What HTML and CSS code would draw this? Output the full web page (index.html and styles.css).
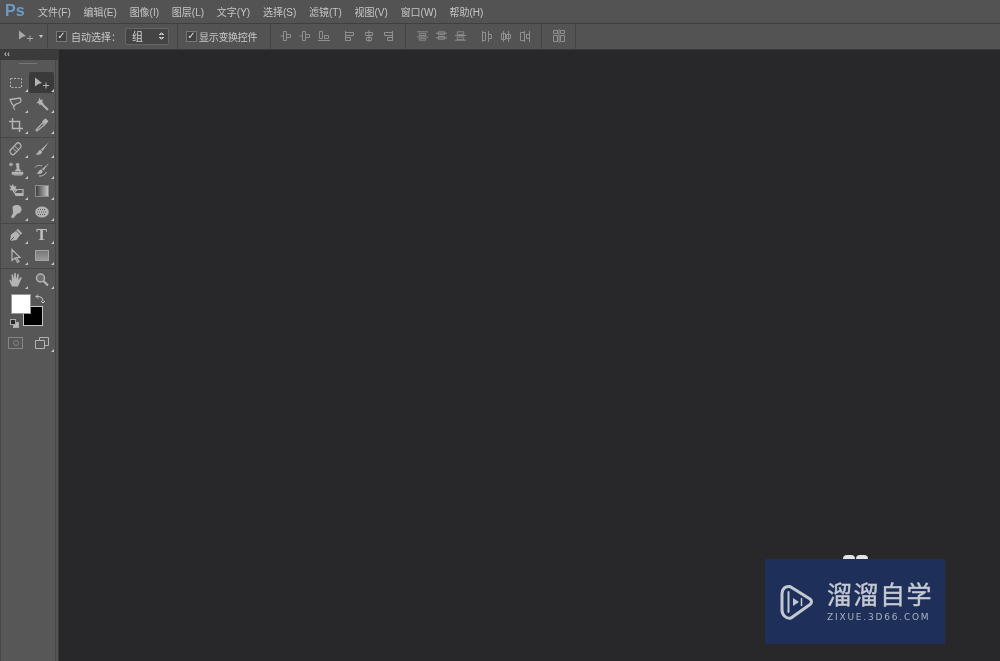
FILE: index.html
```html
<!DOCTYPE html>
<html lang="zh-CN">
<head>
  <meta charset="UTF-8" />
  <title>Photoshop</title>
  <link rel="stylesheet" href="styles.css">
</head>
<body>
  <svg class="defs" width="0" height="0">
    <symbol id="al-a" viewBox="0 0 12 12"><path d="M3.500 1.500h3v9h-3zM.5 6h3M6.500 4.500h4v3h-4z" fill="none" stroke="currentColor"/></symbol>
    <symbol id="al-b" viewBox="0 0 12 12"><path d="M1.500 1.500h3v7h-3zM6.500 5.500h4v3h-4zM0 10.500h12" fill="none" stroke="currentColor"/></symbol>
    <symbol id="al-c" viewBox="0 0 12 12"><path d="M1.500 1v10M1.500 2.500h8v3h-8zM1.500 7.500h5v3h-5z" fill="none" stroke="currentColor"/></symbol>
    <symbol id="al-d" viewBox="0 0 12 12"><path d="M6 0v12M2.500 2.500h7v3h-7zM3.500 7.500h5v3h-5z" fill="none" stroke="currentColor"/></symbol>
    <symbol id="al-e" viewBox="0 0 12 12"><path d="M10.500 1v10M2.500 2.500h8v3h-8zM5.500 7.500h5v3h-5z" fill="none" stroke="currentColor"/></symbol>
    <symbol id="al-f" viewBox="0 0 14 12"><path d="M1 1.500h12M3.500 3.500h7v2h-7zM1 7h12M3.500 8.500h7v2h-7z" fill="none" stroke="currentColor"/></symbol>
    <symbol id="al-g" viewBox="0 0 14 12"><path d="M1 3h12M3.500 1.500h7v3h-7zM1 8h12M3.500 6.500h7v3h-7z" fill="none" stroke="currentColor"/></symbol>
    <symbol id="al-h" viewBox="0 0 14 12"><path d="M3.500 1.500h7v3h-7zM1 5.500h12M3.500 7h7v3h-7zM1 10.500h12" fill="none" stroke="currentColor"/></symbol>
    <symbol id="al-i" viewBox="0 0 12 13"><path d="M1.500 1v11M1.500 2.500h3v8h-3zM7.500 1v11M7.500 4.500h3v4h-3z" fill="none" stroke="currentColor"/></symbol>
    <symbol id="al-j" viewBox="0 0 12 13"><path d="M3.500 1v11M1.500 3.500h4v6h-4zM8.500 1v11M6.500 4.500h4v4h-4z" fill="none" stroke="currentColor"/></symbol>
    <symbol id="al-k" viewBox="0 0 12 13"><path d="M5.500 1v11M1.500 2.500h4v8h-4zM10.500 1v11M7.500 4.500h3v4h-3z" fill="none" stroke="currentColor"/></symbol>
    <symbol id="al-l" viewBox="0 0 14 14"><path d="M1.500 1.500h4v3h-4zM8.500 1.500h4v3h-4zM1.500 6.500h4v6h-4zM8.500 6.500h4v6h-4zM7 0v14" fill="none" stroke="currentColor"/></symbol>
    <symbol id="move" viewBox="0 0 18 14"><path d="M2 1.500L9 7 5.500 8 2 10.500z" fill="currentColor"/><path d="M13 6.500v6M10 9.500h6" stroke="currentColor" fill="none"/></symbol>
  </svg>

  <header class="menubar">
    <span class="ps-logo">Ps</span>
    <nav class="menu">
      <span>文件(F)</span><span>编辑(E)</span><span>图像(I)</span><span>图层(L)</span><span>文字(Y)</span>
      <span>选择(S)</span><span>滤镜(T)</span><span>视图(V)</span><span>窗口(W)</span><span>帮助(H)</span>
    </nav>
  </header>

  <div class="optionsbar">
    <div class="grip"></div>
    <div class="opt-tool">
      <svg class="opt-move" width="18" height="14"><use href="#move"/></svg>
      <span class="caret"></span>
    </div>
    <div class="opt-group opt-auto">
      <span class="check">✓</span>
      <span class="opt-label">自动选择：</span>
      <span class="select">组<span class="spin"></span></span>
    </div>
    <div class="opt-group opt-transform">
      <span class="check check-tight">✓</span>
      <span class="opt-label opt-label-tight">显示变换控件</span>
    </div>
    <div class="opt-group opt-align">
      <div class="icons">
        <svg width="12" height="12"><use href="#al-a"/></svg>
        <svg width="12" height="12"><use href="#al-a"/></svg>
        <svg width="12" height="12"><use href="#al-b"/></svg>
      </div>
      <div class="icons">
        <svg width="12" height="12"><use href="#al-c"/></svg>
        <svg width="12" height="12"><use href="#al-d"/></svg>
        <svg width="12" height="12"><use href="#al-e"/></svg>
      </div>
    </div>
    <div class="opt-group opt-dist">
      <div class="icons icons-a">
        <svg width="13" height="12"><use href="#al-f"/></svg>
        <svg width="13" height="12"><use href="#al-g"/></svg>
        <svg width="13" height="12"><use href="#al-h"/></svg>
      </div>
      <div class="icons">
        <svg width="12" height="13"><use href="#al-i"/></svg>
        <svg width="12" height="13"><use href="#al-j"/></svg>
        <svg width="12" height="13"><use href="#al-k"/></svg>
      </div>
    </div>
    <div class="opt-group opt-auto-align">
      <svg width="14" height="14"><use href="#al-l"/></svg>
    </div>
  </div>

  <main class="workspace">
    <aside class="toolbar">
      <div class="collapse">‹‹</div>
      <div class="tools">
        <div class="tool-grip"></div>

        <section class="tool-section">
          <div class="tool-row">
            <span class="tool"><svg width="16" height="16" viewBox="0 0 16 16"><rect x="2.500" y="3.500" width="11" height="9" fill="none" stroke="currentColor" stroke-dasharray="2 1.500"/></svg></span>
            <span class="tool active"><svg width="18" height="14"><use href="#move"/></svg></span>
          </div>
          <div class="tool-row">
            <span class="tool"><svg width="16" height="16" viewBox="0 0 16 16"><path d="M2 3.500l10-1.500c2 2 1 4-1 5-2 .8-4 .6-5 3.500L4 8z" fill="none" stroke="currentColor" stroke-width="1.300"/><path d="M5 11l2 3" stroke="currentColor"/></svg></span>
            <span class="tool"><svg width="16" height="16" viewBox="0 0 16 16"><path d="M7 7l7 7" stroke="currentColor" stroke-width="2"/><path d="M5.500 1.500l1 2.500 2.500-.5-1 2.500 2 1.500-3 .2-1 2.300-1-2.500-3-.5 2.300-1.500z" fill="currentColor"/></svg></span>
          </div>
          <div class="tool-row">
            <span class="tool"><svg width="16" height="16" viewBox="0 0 16 16"><path d="M4.500 1v10.500H15M1 4.500h10.500V15" fill="none" stroke="currentColor" stroke-width="1.500"/></svg></span>
            <span class="tool"><svg width="16" height="16" viewBox="0 0 16 16"><path d="M3 14l-1-1 6.500-7 2 2z" fill="none" stroke="currentColor" stroke-width="1.200"/><path d="M8 4.500l3.500-3.200 3 3-3.200 3.500z" fill="currentColor"/></svg></span>
          </div>
        </section>

        <section class="tool-section tool-section-b">
          <div class="tool-row">
            <span class="tool"><svg width="16" height="16" viewBox="0 0 16 16"><path d="M2 9.500l7-7.500c2-1 4.500 1.500 4 4l-7 7.500c-2 1-4.500-1.500-4-4z" fill="none" stroke="currentColor" stroke-width="1.300"/><path d="M5 7.500l4 3.500M7 5.500l4 3.500" stroke="currentColor"/></svg></span>
            <span class="tool"><svg width="16" height="16" viewBox="0 0 16 16"><path d="M15 1L7 8.500l1.500 1.500z" fill="currentColor"/><path d="M6.500 9C4 9 4.500 12 1.500 13.500c3 1 7-.5 6.500-3z" fill="currentColor"/></svg></span>
          </div>
          <div class="tool-row">
            <span class="tool"><svg width="16" height="16" viewBox="0 0 16 16"><path d="M8 1.500h3v5l2 2.500H7l2-2.500zM4 10h11v2.500H4zM6 13.500h8" fill="currentColor" stroke="currentColor" stroke-width=".5"/><path d="M1 2.500h4M3 .5v4M1.500 1l3 3M4.500 1l-3 3" stroke="currentColor" stroke-width=".8"/></svg></span>
            <span class="tool"><svg width="16" height="16" viewBox="0 0 16 16"><path d="M15 1L8 7l1.500 1.500z" fill="currentColor"/><path d="M7.500 7.500C5 7.500 5 10 2.500 11.500c3 1 6.500 0 6-2.500z" fill="currentColor"/><path d="M1 5.500C3 3 6 3 8 4M5 14c3 .5 6-1 7.500-4" fill="none" stroke="currentColor"/></svg></span>
          </div>
          <div class="tool-row">
            <span class="tool"><svg width="16" height="16" viewBox="0 0 16 16"><path d="M1 1.500l2.500 1.500L5 1l1 2.500 2.500-.5-1 2.500 2 1.500-3 .5-1 2.500-1-2.500-3-.5 1.500-2z" fill="currentColor"/><path d="M9 6.500h6v6H8l-1.500-3z" fill="none" stroke="currentColor" stroke-width="1.200"/><path d="M7 10h8v3H8z" fill="currentColor"/></svg></span>
            <span class="tool"><span class="gradient"></span></span>
          </div>
          <div class="tool-row">
            <span class="tool"><svg width="16" height="16" viewBox="0 0 16 16"><path d="M4.500 3c2-2.500 6-2.500 8-.5 2 2.500 1 5-1 6.500l-2.500 1L5 14.500l-2-1.500 2-4z" fill="currentColor"/></svg></span>
            <span class="tool"><svg width="16" height="16" viewBox="0 0 16 16"><ellipse cx="8" cy="8" rx="7" ry="5.800" fill="currentColor"/><ellipse cx="8" cy="8" rx="7" ry="5.800" fill="none" stroke="#5c5c5c" stroke-width="1" stroke-dasharray="1 1"/><path d="M3 8h10M4 5.500h8M4 10.500h8" stroke="#5c5c5c" stroke-dasharray="1 1"/></svg></span>
          </div>
        </section>

        <section class="tool-section">
          <div class="tool-row">
            <span class="tool"><svg width="16" height="16" viewBox="0 0 16 16"><path d="M2 14l1-6.500 5-3.500 4 4-3.500 5z" fill="currentColor"/><path d="M9 2.500L13.500 7" stroke="currentColor" stroke-width="2"/><path d="M2 14l4-4" stroke="#5c5c5c"/></svg></span>
            <span class="tool"><span class="tool-t">T</span></span>
          </div>
          <div class="tool-row">
            <span class="tool"><svg width="16" height="16" viewBox="0 0 16 16"><path d="M4 1.500v11l3-2.500 2.500 4.500 1.500-1-2.500-4H12z" fill="none" stroke="currentColor" stroke-width="1.200"/></svg></span>
            <span class="tool"><span class="shape"></span></span>
          </div>
        </section>

        <section class="tool-section">
          <div class="tool-row">
            <span class="tool"><svg width="16" height="16" viewBox="0 0 16 16"><path d="M4 14.500L1.500 9c-.5-1 .8-1.600 1.500-.8L4 9.500 3.500 3c0-1 1.500-1 1.600 0L6 7l.3-5.500c0-1 1.500-1 1.500 0L8.300 7l1-4.500c.2-1 1.600-.8 1.500.2L10.300 8l2-2.500c.7-.8 1.900 0 1.300 1L11.500 11 10 14.500z" fill="currentColor"/></svg></span>
            <span class="tool"><svg width="16" height="16" viewBox="0 0 16 16"><circle cx="6.500" cy="6" r="4" fill="#6f6f6f" stroke="currentColor" stroke-width="1.500"/><path d="M9.500 9l4.500 4.500" stroke="currentColor" stroke-width="2.200"/></svg></span>
          </div>

          <div class="colors">
            <span class="swatch swatch-bg"></span>
            <span class="swatch swatch-fg"></span>
            <svg class="swap" width="11" height="11" viewBox="0 0 11 11"><path d="M1 3.500h1.500C6 3.500 8 5 8 8M1 3.500l2-2M1 3.500l2 2M8 10l-2-2M8 10l2-2" fill="none" stroke="#cfcfcf"/></svg>
            <span class="reset"><span class="reset-bg"></span><span class="reset-fg"></span></span>
          </div>

          <div class="tool-row mode-row">
            <span class="tool"><span class="quickmask"><span class="qm-dot"></span></span></span>
            <span class="tool"><svg width="16" height="14" viewBox="0 0 16 14"><path d="M1.500 4.500h9v8h-9z" fill="none" stroke="currentColor"/><path d="M5.500 4V1.500h9v8H11" fill="none" stroke="currentColor"/></svg></span>
          </div>
        </section>
      </div>
    </aside>
    <div class="canvas"></div>
  </main>

  <div class="watermark">
    <span class="bump"></span>
    <span class="bump"></span>
    <div class="wm-box">
      <svg class="wm-logo" width="36" height="38" viewBox="0 0 36 38">
        <path d="M11 3.500L31 16c2 1.500 2 4 0 5.500L12 35c-5 1-9-3-9-8V11c0-5 3-8 8-7.500z" fill="none" stroke="#c3c8d2" stroke-width="3" stroke-linejoin="round"/>
        <path d="M9.500 9v20" stroke="#c3c8d2" stroke-width="2" stroke-linecap="round"/>
        <path d="M14 15l6 4-6 4z" fill="#c3c8d2"/>
        <path d="M22.500 15v8" stroke="#c3c8d2" stroke-width="1.500"/>
      </svg>
      <div class="wm-text">
        <div class="wm-title">溜溜自学</div>
        <div class="wm-url">ZIXUE.3D66.COM</div>
      </div>
    </div>
  </div>
</body>
</html>
```
FILE: styles.css
```css
* {
  box-sizing: border-box;
}

html, body {
  height: 100%;
}

body {
  margin: 0;
  display: flex;
  flex-direction: column;
  overflow: hidden;
  position: relative;
  background-color: #28272a;
  color: #c6c6c6;
  font-family: "Liberation Sans", "Noto Sans CJK SC", sans-serif;
  font-size: 10px;
}

.defs {
  position: absolute;
}

/* the source shot is a soft jpeg */
.menubar, .optionsbar, .toolbar, .watermark {
  filter: blur(.35px);
}

/* menu bar */
.menubar {
  height: 24px;
  display: flex;
  align-items: center;
  padding-left: 5px;
  padding-bottom: 1px;
  background-color: #535353;
  border-bottom: 1px solid #403f40;
}

.ps-logo {
  width: 33px;
  color: #6d9cc4;
  font-size: 16px;
  font-weight: 700;
}

.menu {
  display: flex;
  gap: 12.750px;
}

/* options bar */
.optionsbar {
  height: 26px;
  display: flex;
  align-items: center;
  background-color: #535353;
  border-bottom: 1px solid #3a3a3a;
  color: #c8c8c8;
}

.grip {
  width: 7px;
  height: 100%;
}

.opt-tool {
  width: 41px;
  height: 100%;
  display: flex;
  align-items: center;
  padding-left: 10px;
  padding-bottom: 1px;
  border-right: 1px solid #444;
}

.opt-move {
  color: #a8a8a8;
}

.caret {
  margin-left: 4px;
  border-left: 2.500px solid transparent;
  border-right: 2.500px solid transparent;
  border-top: 3px solid #c8c8c8;
}

.opt-group {
  height: 100%;
  display: flex;
  align-items: center;
  padding-bottom: 1px;
  border-right: 1px solid #444;
}

.opt-auto {
  width: 130px;
  padding-left: 8px;
}

.opt-transform {
  width: 93px;
  padding-left: 8px;
}

.check {
  width: 11px;
  height: 11px;
  margin-right: 4px;
  display: flex;
  align-items: center;
  justify-content: center;
  background-color: #414141;
  border: 1px solid #777;
  color: #e2e2e2;
  font-family: "DejaVu Sans", sans-serif;
  font-size: 10px;
  line-height: 1;
}

.check-tight {
  margin-right: 2px;
}

.opt-label {
  white-space: nowrap;
}

.opt-label-tight {
  letter-spacing: -.3px;
}

.select {
  width: 44px;
  height: 17px;
  margin-left: 4px;
  padding-left: 6px;
  display: flex;
  align-items: center;
  justify-content: space-between;
  background-color: #444;
  border: 1px solid #666;
  border-radius: 2px;
  color: #d4d4d4;
  font-size: 11px;
}

.spin {
  width: 5px;
  height: 8px;
  margin-right: 4px;
  background:
    linear-gradient(135deg, transparent 50%, #ccc 50%) 0 0 / 2.500px 3px no-repeat,
    linear-gradient(225deg, transparent 50%, #ccc 50%) 100% 0 / 2.500px 3px no-repeat,
    linear-gradient(45deg, transparent 50%, #ccc 50%) 0 100% / 2.500px 3px no-repeat,
    linear-gradient(315deg, transparent 50%, #ccc 50%) 100% 100% / 2.500px 3px no-repeat;
}

.icons {
  display: flex;
  gap: 7px;
  color: #8f8f8f;
}

.icons-a {
  gap: 6px;
}

.opt-align {
  width: 135px;
  padding-left: 9px;
  gap: 14px;
}

.opt-dist {
  width: 136px;
  padding-left: 10px;
  gap: 14px;
}

.opt-auto-align {
  width: 34px;
  justify-content: center;
  color: #8f8f8f;
}

/* workspace */
.workspace {
  flex: 1;
  display: flex;
  min-height: 0;
}

.toolbar {
  width: 59px;
  display: flex;
  flex-direction: column;
  background-color: #535353;
  border-right: 1px solid #3a3a3a;
}

.collapse {
  height: 10px;
  padding-left: 4px;
  background-color: #3b3b3b;
  color: #bbb;
  font-size: 9px;
  line-height: 9px;
  font-weight: 700;
}

.tools {
  flex: 1;
  margin-right: 2px;
  border-left: 1px solid #474747;
  border-right: 1px solid #474747;
  background-color: #575757;
}

.tool-grip {
  height: 12px;
  margin: 0 auto;
  width: 18px;
  background: linear-gradient(#767676, #767676) 0 3px / 100% 1px no-repeat;
}

.tool-section {
  padding: 0 0 2px;
  border-bottom: 1px solid #474747;
}

.tool-section-b {
  padding-bottom: 1px;
}

.tool-section:last-child {
  border-bottom: none;
}

.tool-row {
  height: 21px;
  display: flex;
  gap: 1px;
  padding-left: 2px;
}

.tool {
  position: relative;
  width: 25px;
  height: 21px;
  display: flex;
  align-items: center;
  justify-content: center;
  color: #b4b4b4;
}

/* corner mark for tool flyouts */
.tool::after {
  content: "";
  position: absolute;
  right: 0;
  bottom: 1px;
  border-left: 3px solid transparent;
  border-bottom: 3px solid #c4c4c4;
}

.tool.active {
  background-color: #3a3a3a;
  border-radius: 2px;
  color: #b4b4b4;
}

.gradient {
  width: 14px;
  height: 12px;
  background: linear-gradient(90deg, #3e3e3e, #c4c4c4);
  border: 1px solid #8d8d8d;
}

.shape {
  width: 14px;
  height: 11px;
  background: linear-gradient(#777, #9a9a9a);
  border: 1px solid #a3a3a3;
}

.tool-t {
  color: #c0c0c0;
  font-family: "Liberation Serif", serif;
  font-size: 16px;
  font-weight: 700;
}

.quickmask {
  width: 15px;
  height: 12px;
  display: flex;
  align-items: center;
  justify-content: center;
  border: 1px solid #858585;
}

.qm-dot {
  width: 6px;
  height: 6px;
  border: 1px solid #858585;
  border-radius: 50%;
}

/* colour swatches */
.colors {
  position: relative;
  height: 40px;
  margin-top: 2px;
}

.swatch {
  position: absolute;
  width: 20px;
  height: 20px;
}

.swatch-bg {
  left: 22px;
  top: 14px;
  background-color: #000;
  border: 1px solid #c8c8c8;
}

.swatch-fg {
  left: 10px;
  top: 2px;
  background-color: #fff;
  border: 1px solid #999;
}

.swap {
  position: absolute;
  left: 34px;
  top: 1px;
}

.reset {
  position: absolute;
  left: 9px;
  top: 27px;
  width: 9px;
  height: 9px;
}

.reset-bg, .reset-fg {
  position: absolute;
  width: 6px;
  height: 6px;
  border: 1px solid #aaa;
}

.reset-bg {
  right: 0;
  bottom: 0;
  background-color: #bbb;
}

.reset-fg {
  left: 0;
  top: 0;
  background-color: #2a2a2a;
}

.mode-row .tool:first-child::after {
  display: none;
}

.canvas {
  flex: 1;
  background-color: #28272a;
}

/* watermark */
.watermark {
  position: absolute;
  left: 765px;
  top: 555px;
  width: 180px;
  display: flex;
  flex-wrap: wrap;
  justify-content: center;
  gap: 0 1px;
}

.bump {
  width: 12px;
  height: 4px;
  background-color: #e4e4e4;
  border-radius: 6px 6px 0 0;
}

.wm-box {
  width: 180px;
  height: 85px;
  display: flex;
  align-items: center;
  padding-left: 14px;
  gap: 12px;
  background-color: #1e3059;
}

.wm-text {
  display: flex;
  flex-direction: column;
}

.wm-title {
  color: #c5c9d3;
  font-size: 25px;
  line-height: 28px;
  letter-spacing: 1.500px;
  white-space: nowrap;
  -webkit-text-stroke: .4px #c5c9d3;
}

.wm-url {
  margin-top: 2px;
  color: #aab0be;
  font-family: "DejaVu Sans", sans-serif;
  font-size: 9px;
  letter-spacing: 1.800px;
  line-height: 12px;
  white-space: nowrap;
}
```
